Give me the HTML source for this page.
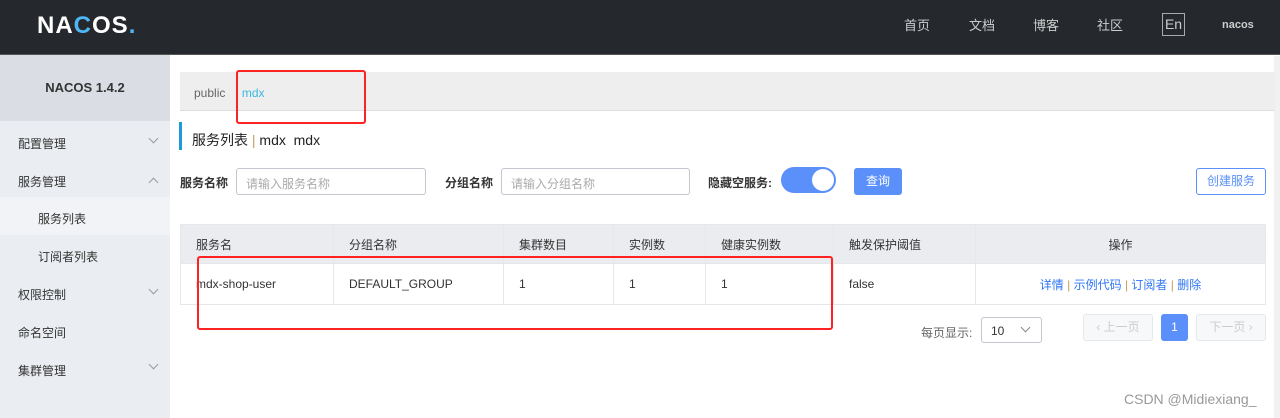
<!DOCTYPE html>
<html><head><meta charset="utf-8"><style>
*{box-sizing:border-box;margin:0;padding:0}
body{width:1280px;height:418px;overflow:hidden;background:#fff;font-family:"Liberation Sans","Noto Sans CJK SC",sans-serif;font-size:12px;color:#333;position:relative}
.a{position:absolute}
.hd{left:0;top:0;width:1280px;height:55px;background:#25292e;border-bottom:1px solid #555}
.nav{color:#ccc;font-size:13px;top:15px}
.sb{left:0;top:55px;width:170px;height:363px;background:#eaedf1}
.mi{left:18px;font-size:12px;color:#333}
.chev{left:150px;width:7px;height:7px;border-right:1px solid #999;border-bottom:1px solid #999;transform:rotate(45deg)}
.inp{height:27px;border:1px solid #c4c6cf;border-radius:3px;color:#aaa;padding:6px 9px;font-size:12px}
.lbl{font-size:12px;color:#333;font-weight:bold}
table{border-collapse:collapse;position:absolute;left:180px;top:224px;width:1086px}
td,th{border:1px solid #e6e7eb;font-weight:normal;text-align:left;padding-left:15px;font-size:12px}
th{background:#ebecf0;height:39px}
td{height:41px}
.red{border:2px solid #f22;border-radius:3px}
.lnk{color:#2f76f5}
</style></head><body>
<div class="a hd"></div>
<div class="a" style="left:37px;top:12px;color:#fff;font-size:24px;font-weight:bold;letter-spacing:1px">NA<span style="color:#4fb6f5">C</span>OS<span style="color:#4fb6f5">.</span></div>
<div class="a nav" style="left:904px">首页</div>
<div class="a nav" style="left:969px">文档</div>
<div class="a nav" style="left:1033px">博客</div>
<div class="a nav" style="left:1097px">社区</div>
<div class="a" style="left:1162px;top:13px;width:23px;height:23px;border:1px solid #aaa;color:#ccc;font-size:14px;text-align:center;line-height:21px">En</div>
<div class="a" style="left:1222px;top:19px;color:#ccc;font-size:11px;font-weight:bold">nacos</div>

<div class="a sb"></div>
<div class="a" style="left:0;top:55px;width:170px;height:66px;background:#dadee4;font-weight:bold;font-size:13px;text-align:center;line-height:66px">NACOS 1.4.2</div>
<div class="a mi" style="top:135px">配置管理</div><div class="a chev" style="top:135px"></div>
<div class="a mi" style="top:173px">服务管理</div><div class="a chev" style="top:179px;transform:rotate(225deg)"></div>
<div class="a" style="left:0;top:197px;width:170px;height:38px;background:#f2f3f6"></div>
<div class="a mi" style="left:38px;top:210px">服务列表</div>
<div class="a mi" style="left:38px;top:248px">订阅者列表</div>
<div class="a mi" style="top:286px">权限控制</div><div class="a chev" style="top:286px"></div>
<div class="a mi" style="top:324px">命名空间</div>
<div class="a mi" style="top:362px">集群管理</div><div class="a chev" style="top:361px"></div>

<div class="a" style="left:1274px;top:56px;width:6px;height:362px;background:#f1f1f1"></div>
<div class="a" style="left:180px;top:72px;width:1095px;height:39px;background:#eeeeee;border-bottom:1px solid #ddd"></div>
<div class="a" style="left:194px;top:86px;color:#666">public &nbsp; <span style="color:#999">|</span> <span style="color:#3bb8e0">mdx</span></div>
<div class="a red" style="left:236px;top:70px;width:130px;height:54px"></div>

<div class="a" style="left:179px;top:122px;width:3px;height:28px;background:#1e9ad6"></div>
<div class="a" style="left:192px;top:130px;font-size:14px;color:#222">服务列表 <span style="color:#c89b5c">|</span> mdx&nbsp; mdx</div>

<div class="a lbl" style="left:180px;top:174px">服务名称</div>
<div class="a inp" style="left:236px;top:168px;width:190px">请输入服务名称</div>
<div class="a lbl" style="left:445px;top:174px">分组名称</div>
<div class="a inp" style="left:501px;top:168px;width:189px">请输入分组名称</div>
<div class="a lbl" style="left:708px;top:174px">隐藏空服务:</div>
<div class="a" style="left:781px;top:167px;width:55px;height:26px;border-radius:13px;background:#5b8ff9"><div class="a" style="right:2px;top:2px;width:22px;height:22px;border-radius:50%;background:#fff"></div></div>
<div class="a" style="left:854px;top:168px;width:48px;height:27px;background:#5b8ff9;border-radius:3px;color:#fff;text-align:center;line-height:27px">查询</div>
<div class="a" style="left:1196px;top:168px;width:70px;height:27px;border:1px solid #5b8ff9;border-radius:3px;color:#5b8ff9;text-align:center;line-height:25px">创建服务</div>

<table><tr><th style="width:153px">服务名</th><th style="width:170px">分组名称</th><th style="width:110px">集群数目</th><th style="width:92px">实例数</th><th style="width:128px">健康实例数</th><th style="width:142px">触发保护阈值</th><th style="text-align:center;padding:0">操作</th></tr>
<tr><td>mdx-shop-user</td><td>DEFAULT_GROUP</td><td>1</td><td>1</td><td>1</td><td>false</td><td style="text-align:center;padding:0"><span class="lnk">详情</span> <span style="color:#c89b5c">|</span> <span class="lnk">示例代码</span> <span style="color:#c89b5c">|</span> <span class="lnk">订阅者</span> <span style="color:#c89b5c">|</span> <span class="lnk">删除</span></td></tr></table>
<div class="a red" style="left:197px;top:256px;width:636px;height:74px"></div>

<div class="a" style="left:921px;top:324px;color:#666">每页显示:</div>
<div class="a" style="left:981px;top:317px;width:61px;height:26px;border:1px solid #c4c6cf;border-radius:3px;padding:6px 9px">10</div>
<div class="a" style="left:1022px;top:324px;width:7px;height:7px;border-right:1px solid #888;border-bottom:1px solid #888;transform:rotate(45deg)"></div>
<div class="a" style="left:1083px;top:314px;width:70px;height:27px;border:1px solid #e6e7eb;background:#f7f8fa;border-radius:3px;color:#ccc;text-align:center;line-height:25px">‹ 上一页</div>
<div class="a" style="left:1161px;top:314px;width:27px;height:27px;background:#5b8ff9;border-radius:3px;color:#fff;text-align:center;line-height:27px">1</div>
<div class="a" style="left:1196px;top:314px;width:70px;height:27px;border:1px solid #e6e7eb;background:#f7f8fa;border-radius:3px;color:#ccc;text-align:center;line-height:25px">下一页 ›</div>
<div class="a" style="left:1124px;top:391px;color:#999;font-size:14px">CSDN @Midiexiang_</div>
</body></html>
